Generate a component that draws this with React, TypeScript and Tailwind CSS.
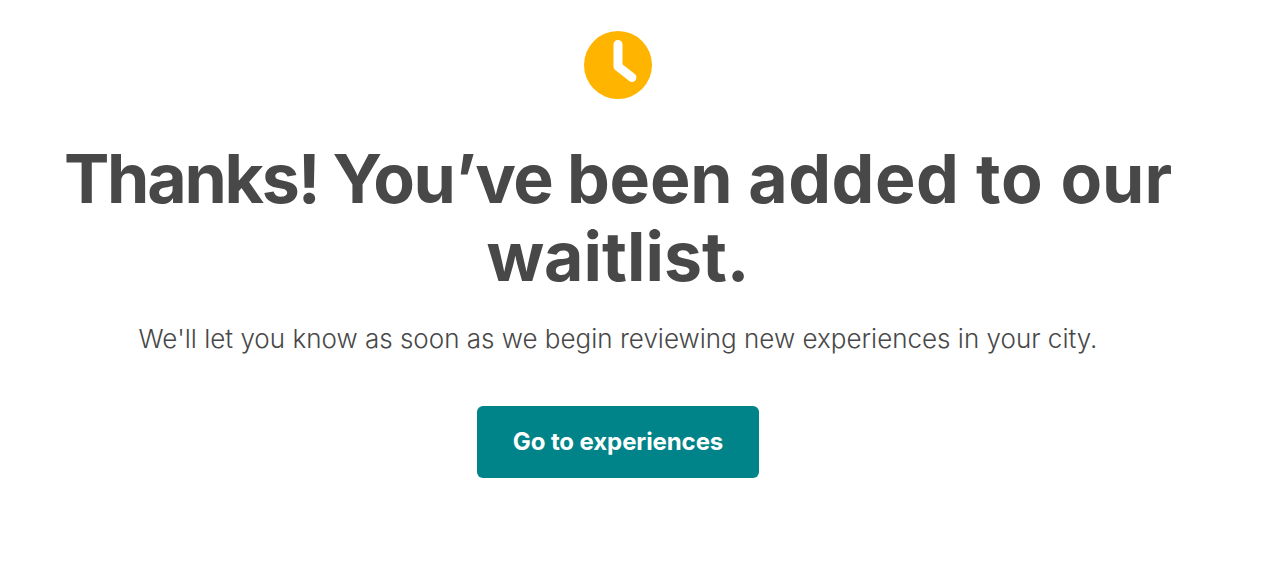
function ClockIcon() {
  return (
    <svg width="68" height="68" viewBox="0 0 68 68" fill="none" aria-hidden="true">
      <circle cx="34" cy="34" r="34" fill="#ffb400" />
      <path d="M34 13.5V35.5L48 46.5" stroke="#fff" strokeWidth="9" strokeLinecap="round" strokeLinejoin="round" />
    </svg>
  );
}

const headingWords = [
  { text: "Thanks! ", tracking: "tracking-[-2.2px]" },
  { text: "You’ve ", tracking: "tracking-[-1.5px]" },
  { text: "been ", tracking: "tracking-[-0.2px]" },
  { text: "added ", tracking: "tracking-[0.5px]" },
  { text: "to ", tracking: "tracking-[0.8px]" },
  { text: "our", tracking: "tracking-normal" },
];

export default function App() {
  return (
    <main className="flex h-[571px] w-[1236px] flex-col items-center bg-white pt-[31px] font-['Inter','Open_Sans',sans-serif] text-[#484848]">
      <ClockIcon />
      <h1 className="mt-10 text-center text-[68px] leading-[78px] font-bold">
        <span className="block whitespace-nowrap">
          {headingWords.map((word) => (
            <span key={word.text} className={word.tracking}>{word.text}</span>
          ))}
        </span>
        <span className="block">waitlist.</span>
      </h1>
      <p className="mt-[26px] text-[26px] leading-9 font-[350] whitespace-nowrap">
        We'll let you know as soon as we begin reviewing new experiences in your city.
      </p>
      <button
        type="button"
        className="mt-[49px] h-[72px] w-[282px] rounded-md bg-[#008489] text-2xl font-bold tracking-[-0.1px] text-white"
      >
        Go to experiences
      </button>
    </main>
  );
}
